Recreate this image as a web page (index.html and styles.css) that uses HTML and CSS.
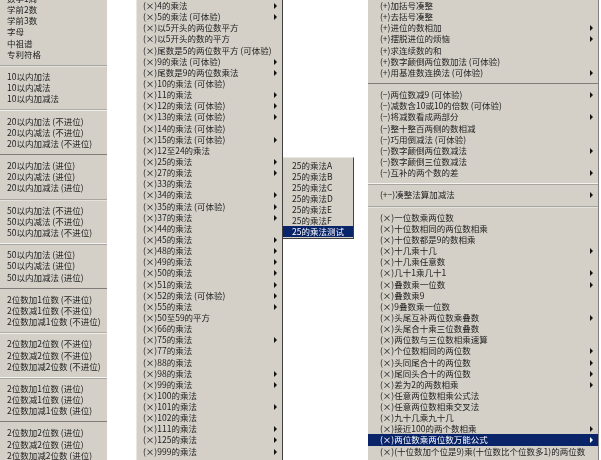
FILE: index.html
```
<!DOCTYPE html>
<html lang="zh">
<head>
<meta charset="utf-8">
<title>菜单</title>
<link rel="stylesheet" href="styles.css">
</head>
<body>
<div class="desktop">
  <div class="menu menu-left">
    <div class="list list-left">
      <div class="row">数学1周</div><div class="row">学前2数</div><div class="row">学前3数</div><div class="row">字母</div><div class="row">中祖谱</div><div class="row">专利符格</div>
      <div class="sep sep-mid"></div>
      <div class="row">10以内加法</div><div class="row">10以内减法</div><div class="row">10以内加减法</div>
      <div class="sep sep-soft"></div>
      <div class="row">20以内加法 (不进位)</div><div class="row">20以内减法 (不进位)</div><div class="row">20以内加减法 (不进位)</div>
      <div class="sep sep-dark"></div>
      <div class="row">20以内加法 (进位)</div><div class="row">20以内减法 (进位)</div><div class="row">20以内加减法 (进位)</div>
      <div class="sep sep-mid"></div>
      <div class="row">50以内加法 (不进位)</div><div class="row">50以内减法 (不进位)</div><div class="row">50以内加减法 (不进位)</div>
      <div class="sep sep-light"></div>
      <div class="row">50以内加法 (进位)</div><div class="row">50以内减法 (进位)</div><div class="row">50以内加减法 (进位)</div>
      <div class="sep sep-dark"></div>
      <div class="row">2位数加1位数 (不进位)</div><div class="row">2位数减1位数 (不进位)</div><div class="row">2位数加减1位数 (不进位)</div>
      <div class="sep sep-soft"></div>
      <div class="row">2位数加2位数 (不进位)</div><div class="row">2位数减2位数 (不进位)</div><div class="row">2位数加减2位数 (不进位)</div>
      <div class="sep sep-light"></div>
      <div class="row">2位数加1位数 (进位)</div><div class="row">2位数减1位数 (进位)</div><div class="row">2位数加减1位数 (进位)</div>
      <div class="sep sep-dark"></div>
      <div class="row">2位数加2位数 (进位)</div><div class="row">2位数减2位数 (进位)</div><div class="row">2位数加减2位数 (进位)</div>
    </div>
  </div>
  <div class="menu menu-mid">
    <div class="list list-mid">
      <div class="row sub">(×)4的乘法</div><div class="row sub">(×)5的乘法 (可体验)</div><div class="row">(×)以5开头的两位数平方</div><div class="row">(×)以5开头的数的平方</div><div class="row">(×)尾数是5的两位数平方 (可体验)</div><div class="row sub">(×)9的乘法 (可体验)</div><div class="row sub">(×)尾数是9的两位数乘法</div><div class="row">(×)10的乘法 (可体验)</div><div class="row sub">(×)11的乘法</div><div class="row sub">(×)12的乘法 (可体验)</div><div class="row sub">(×)13的乘法 (可体验)</div><div class="row">(×)14的乘法 (可体验)</div><div class="row sub">(×)15的乘法 (可体验)</div><div class="row">(×)12至24的乘法</div>
      <div class="row sub">(×)25的乘法</div><div class="row sub">(×)27的乘法</div><div class="row">(×)33的乘法</div><div class="row sub">(×)34的乘法</div><div class="row sub">(×)35的乘法 (可体验)</div><div class="row sub">(×)37的乘法</div><div class="row">(×)44的乘法</div><div class="row sub">(×)45的乘法</div><div class="row sub">(×)48的乘法</div><div class="row sub">(×)49的乘法</div><div class="row sub">(×)50的乘法</div><div class="row sub">(×)51的乘法</div><div class="row sub">(×)52的乘法 (可体验)</div><div class="row sub">(×)55的乘法</div>
      <div class="row">(×)50至59的平方</div><div class="row">(×)66的乘法</div><div class="row sub">(×)75的乘法</div><div class="row">(×)77的乘法</div><div class="row">(×)88的乘法</div><div class="row sub">(×)98的乘法</div><div class="row sub">(×)99的乘法</div><div class="row">(×)100的乘法</div><div class="row sub">(×)101的乘法</div><div class="row">(×)102的乘法</div><div class="row sub">(×)111的乘法</div><div class="row sub">(×)125的乘法</div><div class="row sub">(×)999的乘法</div>
    </div>
    <div class="menu flyout">
      <div class="row">25的乘法A</div><div class="row">25的乘法B</div><div class="row">25的乘法C</div><div class="row">25的乘法D</div><div class="row">25的乘法E</div><div class="row">25的乘法F</div><div class="row active">25的乘法测试</div>
    </div>
  </div>
  <div class="menu menu-right">
    <div class="list list-right">
      <div class="row">(+)加括号凑整</div><div class="row">(+)去括号凑整</div><div class="row sub">(+)进位的数相加</div><div class="row sub">(+)摆脱进位的烦恼</div><div class="row">(+)求连续数的和</div><div class="row">(+)数字颠倒两位数加法 (可体验)</div><div class="row sub">(+)用基准数连换法 (可体验)</div>
      <div class="sep sep-dark"></div>
      <div class="row sub">(−)两位数减9 (可体验)</div><div class="row">(−)减数含10或10的倍数 (可体验)</div><div class="row sub">(−)将减数看成两部分</div><div class="row">(−)整十整百两侧的数相减</div><div class="row">(−)巧用倒减法 (可体验)</div><div class="row sub">(−)数字颠倒两位数减法</div><div class="row">(−)数字颠倒三位数减法</div><div class="row sub">(−)互补的两个数的差</div>
      <div class="sep sep-light"></div>
      <div class="row sub">(+−)凑整法算加减法</div>
      <div class="sep sep-mid"></div>
      <div class="row">(×)一位数乘两位数</div><div class="row">(×)十位数相同的两位数相乘</div><div class="row">(×)十位数都是9的数相乘</div><div class="row sub">(×)十几乘十几</div><div class="row">(×)十几乘任意数</div><div class="row sub">(×)几十1乘几十1</div><div class="row sub">(×)叠数乘一位数</div><div class="row">(×)叠数乘9</div><div class="row">(×)9叠数乘一位数</div><div class="row sub">(×)头尾互补两位数乘叠数</div><div class="row">(×)头尾合十乘三位数叠数</div><div class="row">(×)两位数与三位数相乘速算</div><div class="row sub">(×)个位数相同的两位数</div><div class="row sub">(×)头同尾合十的两位数</div><div class="row sub">(×)尾同头合十的两位数</div><div class="row sub">(×)差为2的两数相乘</div><div class="row">(×)任意两位数相乘公式法</div><div class="row">(×)任意两位数相乘交叉法</div><div class="row">(×)九十几乘九十几</div><div class="row sub">(×)接近100的两个数相乘</div><div class="row sub active">(×)两位数乘两位数万能公式</div><div class="row">(×)(十位数加个位是9)乘(十位数比个位数多1)的两位数</div>
    </div>
  </div>
</div>
</body>
</html>
```
FILE: styles.css
```
html, body { margin: 0; padding: 0; background: #fff; }
body { width: 601px; height: 460px; overflow: hidden; }
.desktop {
  display: flex;
  align-items: flex-start;
  height: 460px;
  overflow: hidden;
  font-family: "Noto Sans CJK SC", "Liberation Sans", sans-serif;
  font-size: 8.5px;
  color: #222;
  filter: blur(0.3px);
}
.menu {
  background: #d4d0c8;
  box-sizing: border-box;
}
.menu-left { width: 107px; height: 460px; flex: none; }
.menu-mid {
  width: 147px; height: 460px; flex: none; margin-left: 29px;
  position: relative;
  border-left: 1px solid #e8e6e0;
  border-right: 1px solid #404040;
}
.menu-right {
  width: 231px; height: 460px; flex: none; margin-left: 85px;
  border-right: 1px solid #808080;
}
.list-left { margin-top: -7px; padding-left: 7px; }
.list-left .sep { margin-left: -7px; }
.list-mid { margin-top: 0; padding-left: 6px; }
.list-right { margin-top: 0; }
.row {
  height: 11.15px;
  line-height: 11.15px;
  white-space: nowrap;
  position: relative;
}
.list-right .row { padding-left: 12px; }
.sep {
  height: 11.15px;
  box-sizing: border-box;
  position: relative;
}
.sep::before {
  content: "";
  position: absolute;
  left: 0; right: 0; top: 5px;
  height: 1px;
}
.sep-dark::before { background: #7e7c78; }
.sep-mid::before { background: #a8a6a0; box-shadow: 0 1px 0 #e4e2dc; }
.sep-soft::before { background: #b0aea8; box-shadow: 0 1px 0 #f0efea; }
.sep-light::before { background: #f4f3ef; box-shadow: 0 1px 0 #a8a6a0; }
.sub::after {
  content: "";
  position: absolute;
  right: 5px; top: 3px;
  border-left: 3px solid #111;
  border-top: 3px solid transparent;
  border-bottom: 3px solid transparent;
}
.active { background: #0a246a; color: #fff; }
.active.sub::after { border-left-color: #fff; }
.flyout {
  position: absolute;
  left: 146px; top: 157px;
  width: 71px;
  padding: 1.5px 0 1px 0;
  border-top: 1px solid #e8e6e0;
  border-right: 1px solid #404040;
  border-bottom: 1px solid #404040;
}
.flyout .row { padding-left: 9px; }
```
